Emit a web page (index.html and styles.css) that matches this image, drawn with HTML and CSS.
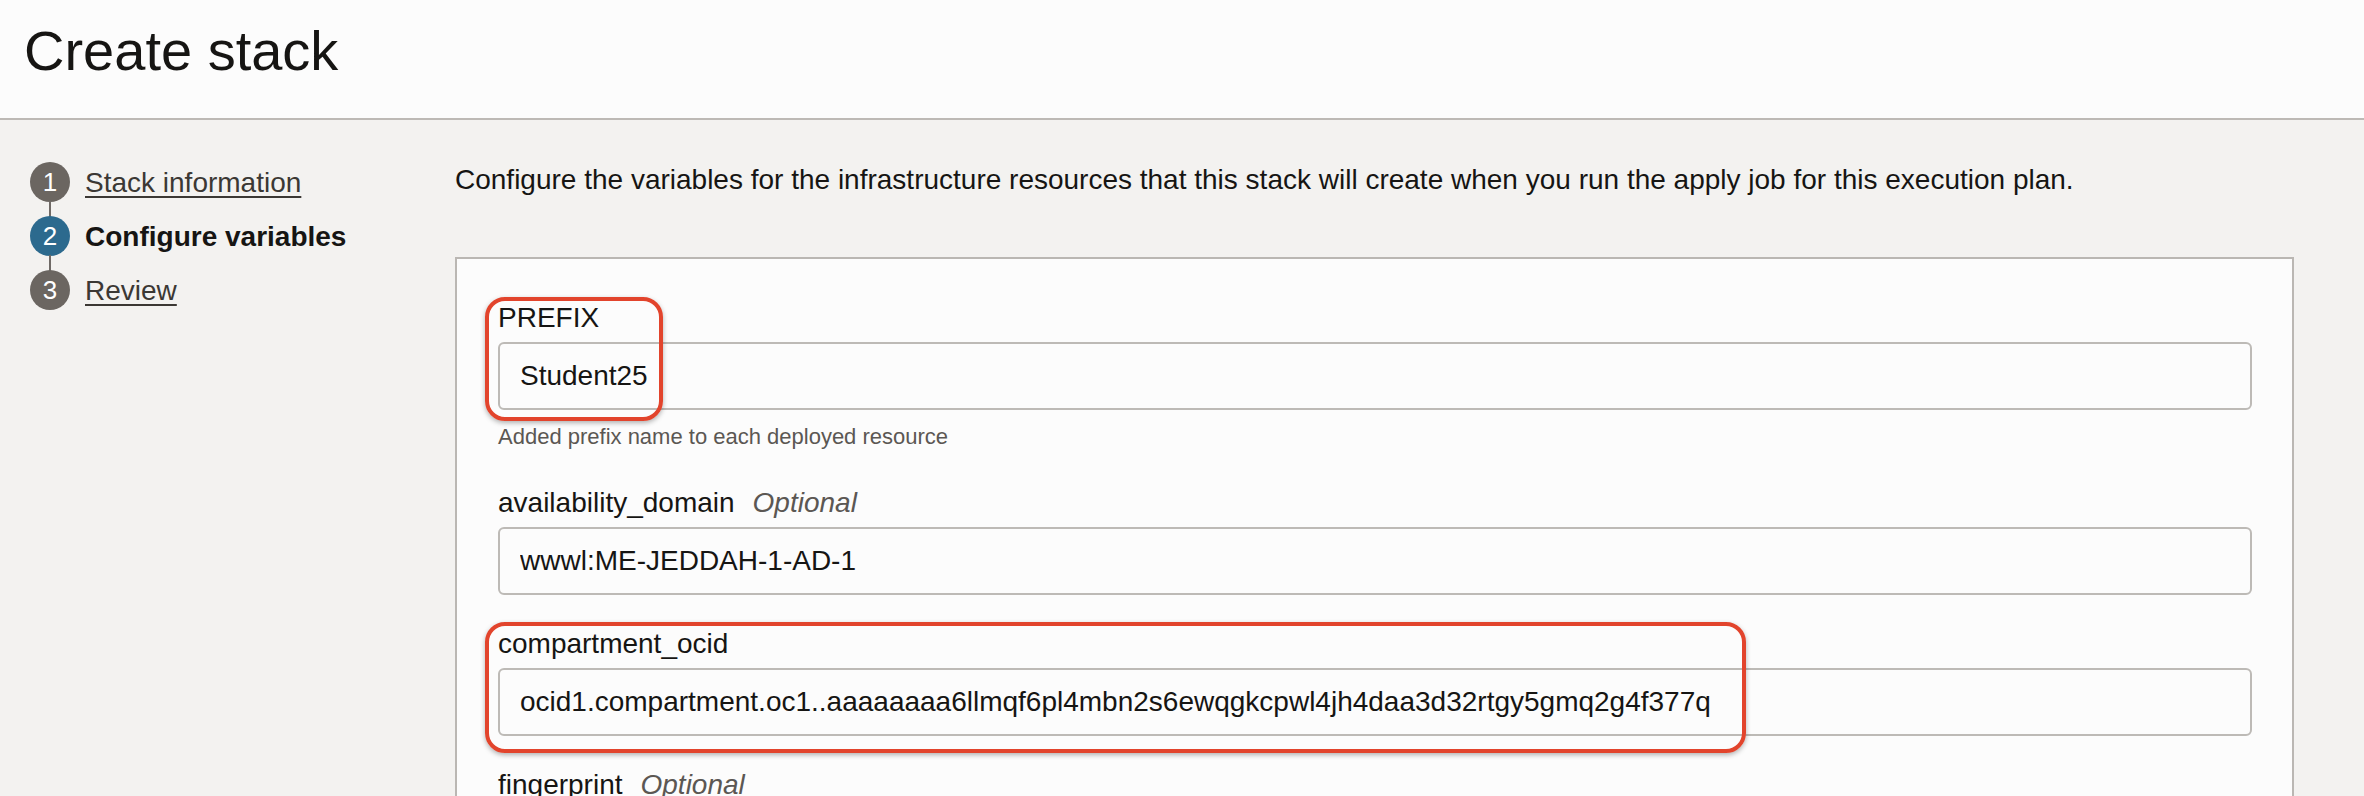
FILE: index.html
```html
<!DOCTYPE html>
<html lang="en">
<head>
<meta charset="utf-8">
<title>Create stack</title>
<link rel="stylesheet" href="styles.css">
</head>
<body>
<header class="page-header">
  <h1 class="page-title">Create stack</h1>
</header>
<div class="layout">
  <nav class="steps">
    <ol class="step-list">
      <li class="step"><span class="step-num">1</span><a class="step-link" href="#">Stack information</a></li>
      <li class="step step-active"><span class="step-num">2</span><span class="step-current">Configure variables</span></li>
      <li class="step"><span class="step-num">3</span><a class="step-link" href="#">Review</a></li>
    </ol>
  </nav>
  <main class="content">
    <p class="intro">Configure the variables for the infrastructure resources that this stack will create when you run the apply job for this execution plan.</p>
    <section class="panel">
      <div class="field">
        <label class="field-label" for="f-prefix">PREFIX</label>
        <input class="field-input" id="f-prefix" type="text" value="Student25" readonly>
        <p class="field-help">Added prefix name to each deployed resource</p>
        <span class="highlight highlight-prefix"></span>
      </div>
      <div class="field">
        <label class="field-label" for="f-ad">availability_domain<span class="optional">Optional</span></label>
        <input class="field-input" id="f-ad" type="text" value="wwwl:ME-JEDDAH-1-AD-1" readonly>
      </div>
      <div class="field">
        <label class="field-label" for="f-comp">compartment_ocid</label>
        <input class="field-input" id="f-comp" type="text" value="ocid1.compartment.oc1..aaaaaaaa6llmqf6pl4mbn2s6ewqgkcpwl4jh4daa3d32rtgy5gmq2g4f377q" readonly>
        <span class="highlight highlight-ocid"></span>
      </div>
      <div class="field">
        <label class="field-label" for="f-fp">fingerprint<span class="optional">Optional</span></label>
        <input class="field-input" id="f-fp" type="text" value="" readonly>
      </div>
    </section>
  </main>
</div>
</body>
</html>
```
FILE: styles.css
```css
html, body {
  margin: 0;
  padding: 0;
}

body {
  font-family: "Liberation Sans", Arial, sans-serif;
  color: #161513;
  background: #f3f2f0;
  overflow: hidden;
}

.page-header {
  height: 120px;
  box-sizing: border-box;
  padding: 17px 24px 0;
  background: #fcfcfc;
  border-bottom: 2px solid #bdb9b5;
}

.page-title {
  margin: 0;
  font-size: 56px;
  line-height: 68px;
  font-weight: 400;
  color: #161513;
}

.layout {
  display: grid;
  grid-template-columns: 455px 1fr;
  background: #f3f2f0;
  min-height: 676px;
}

.step-list {
  list-style: none;
  margin: 0;
  padding: 35px 0 0 30px;
}

.step {
  position: relative;
  display: flex;
  align-items: center;
  gap: 15px;
  height: 54px;
  font-size: 28px;
  line-height: 32px;
}

.step:not(:last-child)::after {
  content: "";
  position: absolute;
  left: 19px;
  top: 46px;
  width: 2px;
  height: 16px;
  background: #6f6a66;
}

.step-num {
  flex: none;
  width: 40px;
  height: 40px;
  border-radius: 50%;
  background: #6b6661;
  color: #fff;
  display: flex;
  align-items: center;
  justify-content: center;
  font-size: 26px;
  line-height: 1;
}

.step-active .step-num {
  background: #2c6a8e;
}

.step-link,
.step-current {
  position: relative;
  top: 1px;
}

.step-link {
  color: #3b3834;
  text-decoration: underline;
  text-decoration-thickness: 2px;
  text-underline-offset: 4px;
}

.step-current {
  font-weight: 700;
  color: #161513;
}

.content {
  padding: 44px 70px 0 0;
}

.intro {
  margin: 0;
  font-size: 28px;
  line-height: 32px;
  color: #161513;
}

.panel {
  display: flex;
  flex-direction: column;
  gap: 33px;
  margin-top: 61px;
  border: 2px solid #bab7b3;
  background: #fcfcfc;
  padding: 43px 40px 40px 41px;
}

.field {
  position: relative;
}

.field-label {
  display: block;
  font-size: 28px;
  line-height: 32px;
  margin-bottom: 8px;
  color: #161513;
}

.optional {
  margin-left: 18px;
  font-style: italic;
  color: #5b5753;
}

.field-input {
  display: block;
  width: 100%;
  height: 68px;
  box-sizing: border-box;
  border: 2px solid #bdbab6;
  border-radius: 6px;
  padding: 0 20px;
  font-family: "Liberation Sans", Arial, sans-serif;
  font-size: 28px;
  color: #161513;
  background: #fcfcfc;
  outline: none;
}

.field-help {
  margin: 13px 0 3px;
  font-size: 22px;
  line-height: 28px;
  color: #5b5753;
}

.highlight {
  position: absolute;
  box-sizing: border-box;
  border: 4px solid #e2442c;
  border-radius: 20px;
  box-shadow: 0 2px 5px rgba(0, 0, 0, 0.3);
  pointer-events: none;
}

.highlight-prefix {
  left: -13px;
  top: -5px;
  width: 178px;
  height: 124px;
}

.highlight-ocid {
  left: -13px;
  top: -6px;
  width: 1261px;
  height: 131px;
}
```
